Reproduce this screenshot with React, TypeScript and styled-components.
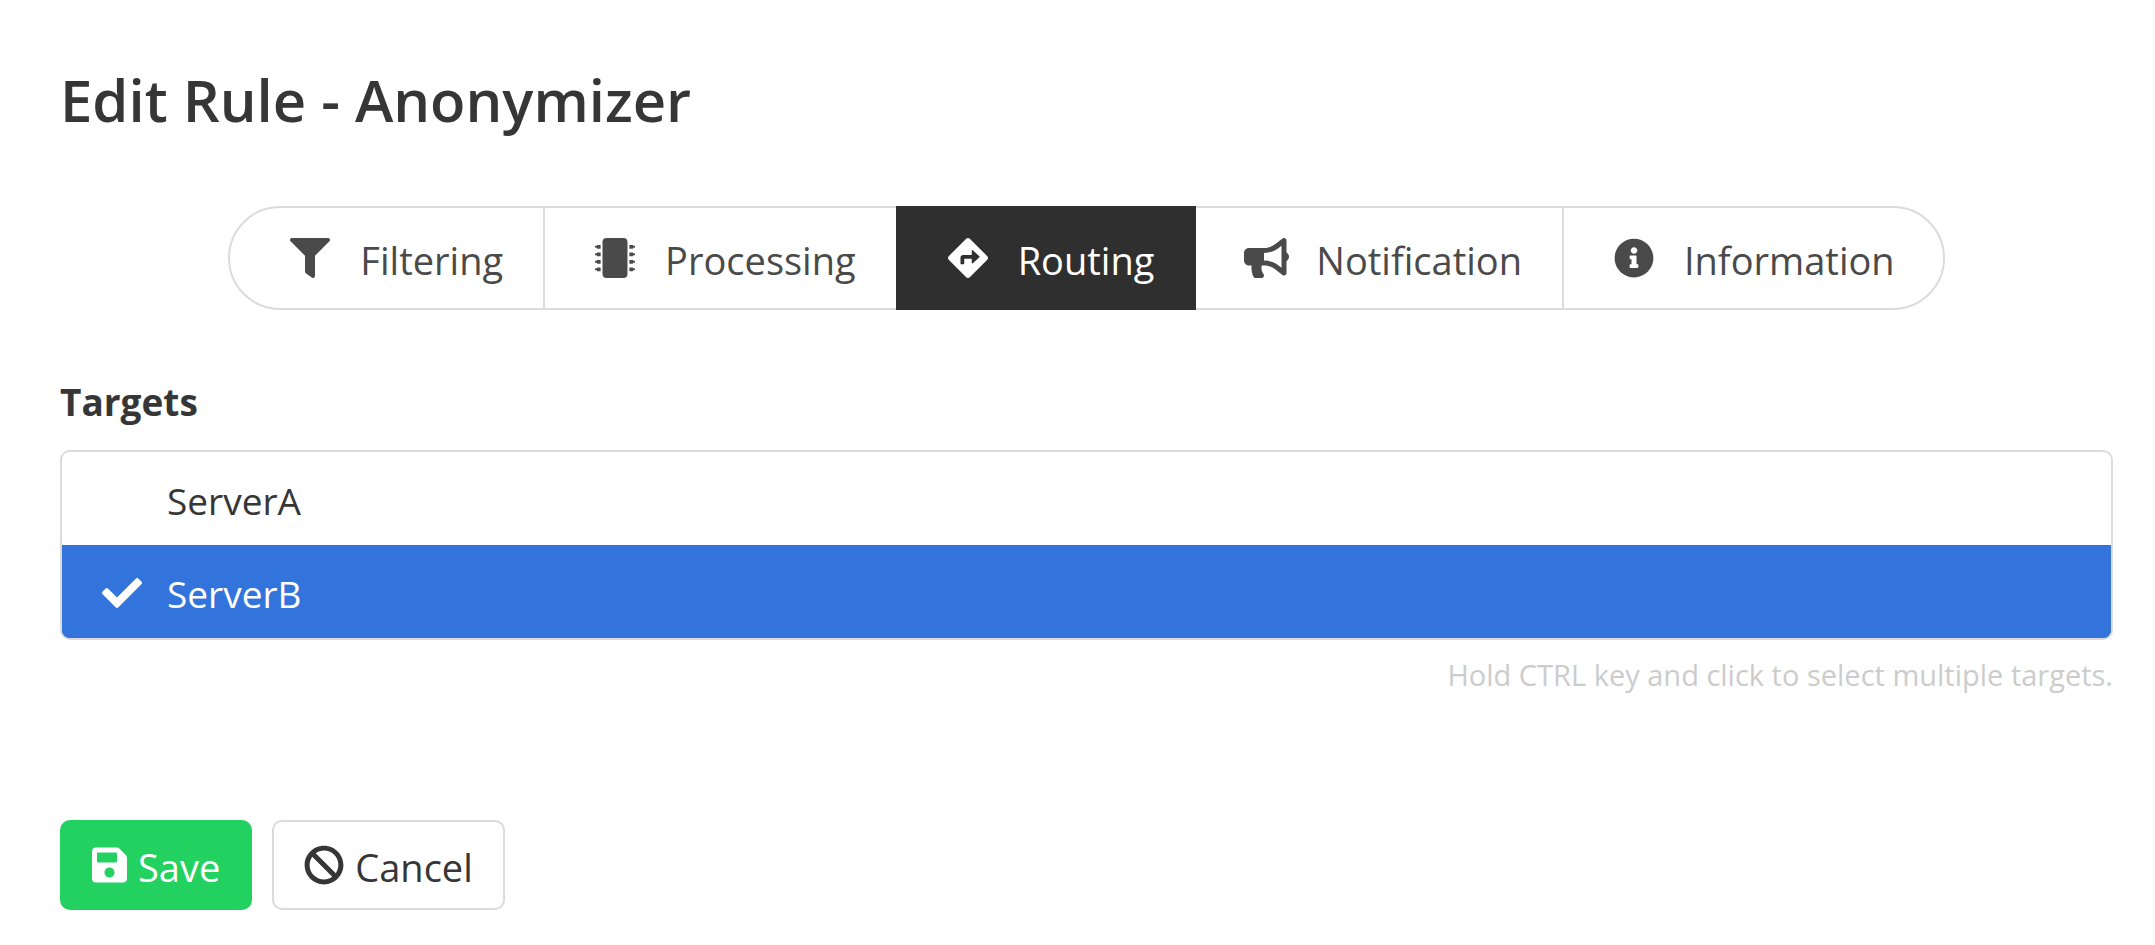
import React, { useState } from "react";
import styled, { createGlobalStyle, css } from "styled-components";
import {
  FaBan,
  FaBullhorn,
  FaDirections,
  FaFilter,
  FaInfoCircle,
  FaMicrochip,
  FaSave,
} from "react-icons/fa";

const GlobalStyle = createGlobalStyle`
  *, *::before, *::after { box-sizing: border-box; }
  body {
    margin: 0;
    background: #fff;
    color: #363636;
    font-family: "Open Sans", "Noto Sans", sans-serif;
    font-size: 37px;
    line-height: 60px;
  }
  button, select { font: inherit; }
`;

const Page = styled.main`
  padding: 58px 42px 34px 60px;
`;

const Title = styled.h1`
  margin: 0;
  font-size: 58px;
  font-weight: 600;
  line-height: 84px;
`;

const Tabs = styled.nav`
  display: flex;
  justify-content: center;
  margin: 64px 0 60px;
`;

const Tab = styled.button<{ $active: boolean }>`
  display: flex;
  align-items: center;
  gap: 20px;
  height: 104px;
  padding: 0 40px;
  border: 2px solid #dbdbdb;
  margin-left: -2px;
  background: #fff;
  color: #4a4a4a;
  font-size: 38px;
  cursor: pointer;

  &:first-child {
    margin-left: 0;
    padding-left: 50px;
    border-radius: 52px 0 0 52px;
  }
  &:last-child {
    padding-right: 48px;
    border-radius: 0 52px 52px 0;
  }

  ${({ $active }) =>
    $active &&
    css`
      z-index: 1;
      border-color: #2f2f2f;
      background: #2f2f2f;
      color: #fff;
    `}
`;

const Icon = styled.svg<{ $width?: number }>`
  flex: none;
  width: ${({ $width = 40 }) => $width}px;
  height: 40px;
`;

const TabIcon = styled.span`
  display: flex;
  justify-content: center;
  width: 60px;
`;

const TabLabel = styled.span`
  padding-top: 4px;
`;

const Label = styled.label`
  display: block;
  margin-bottom: 18px;
  padding-top: 2px;
  font-weight: 700;
`;

const TargetList = styled.select`
  display: block;
  width: 100%;
  height: 190px;
  padding: 0;
  overflow: hidden;
  border: 2px solid #dbdbdb;
  border-radius: 10px;
  outline: none;
  background: #fff;
  color: #363636;
`;

const CHECK_MASK =
  "url(\"data:image/svg+xml,%3Csvg xmlns='http://www.w3.org/2000/svg' viewBox='0 0 512 512'%3E%3Cpath d='M173.898 439.404l-166.4-166.4c-9.997-9.997-9.997-26.206 0-36.204l36.203-36.204c9.997-9.998 26.207-9.998 36.204 0L192 312.69 432.095 72.596c9.997-9.997 26.207-9.997 36.204 0l36.203 36.204c9.997 9.997 9.997 26.206 0 36.204l-294.4 294.401c-9.998 9.997-26.207 9.997-36.204-.001z'/%3E%3C/svg%3E\")";

const TargetOption = styled.option`
  display: flex;
  align-items: center;
  height: 93px;
  padding: 4px 40px 0;
  color: #363636;

  &::before {
    content: "";
    width: 40px;
    height: 40px;
    margin: 0 25px 2px 0;
  }

  &:checked {
    background: #3273dc linear-gradient(#3273dc, #3273dc);
    color: #fff;
  }

  &:checked::before {
    background: #fff;
    mask: ${CHECK_MASK} center / contain no-repeat;
  }
`;

const Help = styled.p`
  margin: 14px 0 124px;
  color: #ccc;
  font-size: 29px;
  line-height: 42px;
  text-align: right;
`;

const Actions = styled.div`
  display: flex;
  gap: 20px;
`;

const ActionButton = styled.button<{ $primary?: boolean }>`
  display: flex;
  align-items: center;
  gap: 11px;
  height: 90px;
  padding: 0 30px;
  border: 2px solid ${({ $primary }) => ($primary ? "#23d160" : "#dbdbdb")};
  border-radius: 10px;
  background: ${({ $primary }) => ($primary ? "#23d160" : "#fff")};
  color: ${({ $primary }) => ($primary ? "#fff" : "#363636")};
  font-size: 38px;
  cursor: pointer;
`;

const ActionLabel = styled.span`
  padding-top: 4px;
`;

const TABS = [
  { name: "Filtering", icon: FaFilter },
  { name: "Processing", icon: FaMicrochip },
  { name: "Routing", icon: FaDirections },
  { name: "Notification", icon: FaBullhorn, iconWidth: 45 },
  { name: "Information", icon: FaInfoCircle },
];

const SERVERS = ["ServerA", "ServerB"];

export default function App() {
  const [tab, setTab] = useState("Routing");
  const [targets, setTargets] = useState<string[]>(["ServerB"]);

  return (
    <>
      <GlobalStyle />
      <Page>
        <Title>Edit Rule - Anonymizer</Title>
        <Tabs>
          {TABS.map(({ name, icon, iconWidth }) => (
            <Tab
              key={name}
              type="button"
              $active={name === tab}
              aria-pressed={name === tab}
              onClick={() => setTab(name)}
            >
              <TabIcon>
                <Icon as={icon} $width={iconWidth} />
              </TabIcon>
              <TabLabel>{name}</TabLabel>
            </Tab>
          ))}
        </Tabs>
        <Label htmlFor="targets">Targets</Label>
        <TargetList
          id="targets"
          multiple
          size={2}
          value={targets}
          onChange={(e) =>
            setTargets(Array.from(e.target.selectedOptions, (o) => o.value))
          }
        >
          {SERVERS.map((server) => (
            <TargetOption key={server} value={server}>
              {server}
            </TargetOption>
          ))}
        </TargetList>
        <Help>Hold CTRL key and click to select multiple targets.</Help>
        <Actions>
          <ActionButton type="submit" $primary>
            <Icon as={FaSave} $width={35} />
            <ActionLabel>Save</ActionLabel>
          </ActionButton>
          <ActionButton type="button">
            <Icon as={FaBan} />
            <ActionLabel>Cancel</ActionLabel>
          </ActionButton>
        </Actions>
      </Page>
    </>
  );
}
